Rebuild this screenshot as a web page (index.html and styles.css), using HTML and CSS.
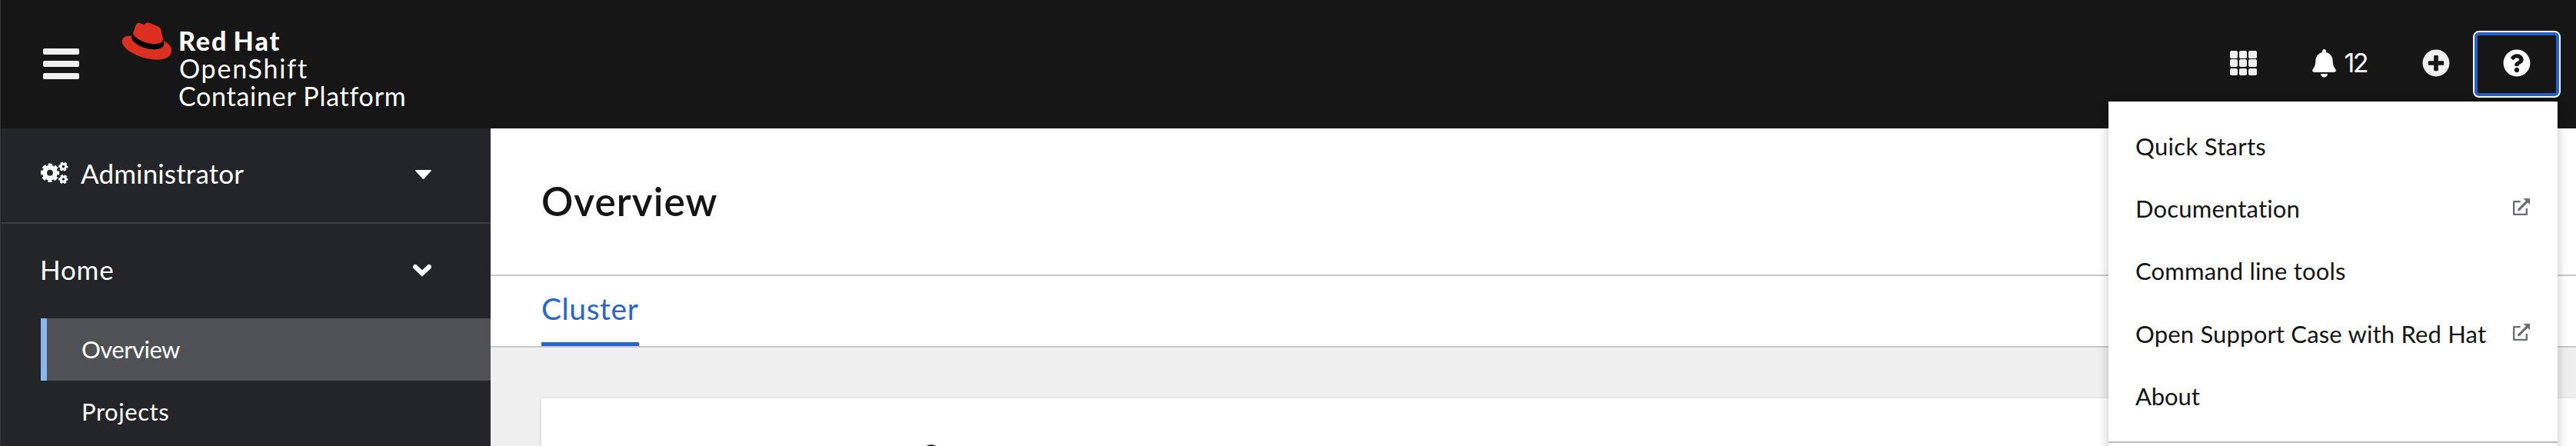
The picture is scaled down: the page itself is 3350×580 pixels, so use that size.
FILE: index.html
```html
<!DOCTYPE html>
<html lang="en">
<head>
<meta charset="utf-8">
<title>Overview · Cluster</title>
<link rel="stylesheet" href="styles.css">
</head>
<body>
<div class="page">
  <header class="masthead">
    <button class="nav-toggle" aria-label="Navigation"><span class="bar"></span><span class="bar"></span><span class="bar"></span></button>
    <div class="brand">
      <svg class="hat" viewBox="0 0 193 146" preserveAspectRatio="none">
        <path fill="#da2f21" d="M129,84c12.5,0,30.61-2.58,30.61-17.46a14,14,0,0,0-.31-3.42l-7.45-32.36c-1.72-7.12-3.23-10.35-15.73-16.6C126.39,9.19,105.26.5,99,.5,93.19.5,91.5,8,84.54,8c-6.68,0-11.64-5.6-17.89-5.6-6,0-9.91,4.09-12.93,12.5,0,0-8.41,23.72-9.49,27.16A6.43,6.43,0,0,0,44,44C44,53.21,80.37,84,129,84m32.53-11.37c1.73,8.19,1.73,9.05,1.73,10.13,0,14-15.74,21.77-36.43,21.77C80,104.47,39.08,76.92,39.08,58.76a18.45,18.45,0,0,1,1.51-7.33C23.77,52.27,2,55.27,2,74.47c0,31.48,74.59,70.28,133.65,70.28,45.28,0,56.7-20.48,56.7-36.65,0-12.72-11-27.16-30.83-35.78"/>
        <path fill="#000" d="M161.52,72.62c1.73,8.19,1.73,9.05,1.73,10.13,0,14-15.74,21.77-36.43,21.77C80,104.52,39.08,77,39.08,58.76a18.45,18.45,0,0,1,1.51-7.33l3.66-9.06A6.43,6.43,0,0,0,44,44C44,53.21,80.37,84,129,84c12.5,0,30.61-2.58,30.61-17.46a14,14,0,0,0-.31-3.42Z"/>
      </svg>
      <div class="brand-text">
        <div class="brand-name">Red Hat</div>
        <div class="brand-product">OpenShift</div>
        <div class="brand-sub">Container Platform</div>
      </div>
    </div>
    <div class="tools">
      <div class="apps"><i></i><i></i><i></i><i></i><i></i><i></i><i></i><i></i><i></i></div>
      <div class="alerts">
        <svg class="bell" viewBox="0 0 31 37"><path fill="#fff" d="M15.500 0C17 0 18 1.200 18 2.800V4C23 5.200 26.300 9.300 26.600 14.500C26.900 20 27.500 22.500 30 25.600C31.500 27.800 30.800 30 28.500 30H2.500C.2 30-.5 27.800 1 25.600C3.500 22.500 4.100 20 4.400 14.500C4.700 9.300 8 5.200 13 4V2.800C13 1.200 14 0 15.500 0ZM11 32H20C20 34.700 18 36.600 15.500 36.600C13 36.600 11 34.700 11 32Z"/></svg>
        <span class="count">12</span>
      </div>
      <svg class="round-icon add" viewBox="0 0 512 512"><path fill="#f0f0f0" d="M256 8C119 8 8 119 8 256s111 248 248 248 248-111 248-248S393 8 256 8zm144 276c0 6.600-5.400 12-12 12h-92v92c0 6.600-5.400 12-12 12h-56c-6.600 0-12-5.400-12-12v-92h-92c-6.600 0-12-5.400-12-12v-56c0-6.600 5.400-12 12-12h92v-92c0-6.600 5.400-12 12-12h56c6.600 0 12 5.400 12 12v92h92c6.600 0 12 5.400 12 12v56z"/></svg>
      <button class="help" aria-label="Help">
        <svg class="round-icon" viewBox="0 0 512 512"><path fill="#fff" d="M504 256c0 136.997-111.043 248-248 248S8 392.997 8 256C8 119.083 119.043 8 256 8s248 111.083 248 248zM262.655 90c-54.497 0-89.255 22.957-116.549 63.758-3.536 5.286-2.353 12.415 2.715 16.258l34.699 26.310c5.205 3.947 12.621 3.008 16.665-2.122 17.864-22.658 30.113-35.797 57.303-35.797 20.429 0 45.698 13.148 45.698 32.958 0 14.976-12.363 22.667-32.534 33.976C247.128 238.528 216 254.941 216 296v4c0 6.627 5.373 12 12 12h56c6.627 0 12-5.373 12-12v-1.333c0-28.462 83.186-29.647 83.186-106.667 0-58.002-60.165-102-116.531-102zM256 338c-25.365 0-46 20.635-46 46 0 25.364 20.635 46 46 46s46-20.636 46-46c0-25.365-20.635-46-46-46z"/></svg>
      </button>
    </div>
    <div class="menu">
      <div class="menu-item quick">Quick Starts</div>
      <div class="menu-item">Documentation
        <svg class="external" viewBox="39 24 66 66"><path fill="none" stroke="#6a6e73" stroke-width="7" stroke-linejoin="round" d="M68 36.500H42.500V86.500H92.500V63"/><path fill="none" stroke="#6a6e73" stroke-width="9.500" stroke-linecap="round" d="M62 68L95 35"/><path fill="#6a6e73" d="M80 24H105V49Z"/></svg>
      </div>
      <div class="menu-item">Command line tools</div>
      <div class="menu-item support">Open Support Case with Red Hat
        <svg class="external" viewBox="39 24 66 66"><path fill="none" stroke="#6a6e73" stroke-width="7" stroke-linejoin="round" d="M68 36.500H42.500V86.500H92.500V63"/><path fill="none" stroke="#6a6e73" stroke-width="9.500" stroke-linecap="round" d="M62 68L95 35"/><path fill="#6a6e73" d="M80 24H105V49Z"/></svg>
      </div>
      <div class="menu-item about">About</div>
      <div class="menu-divider"></div>
    </div>
  </header>
  <div class="body">
    <nav class="sidebar">
      <div class="perspective">
        <svg class="cogs" viewBox="0 0 36 30" fill="none" stroke="#fff">
          <circle cx="12" cy="14.700" r="6.900" stroke-width="6"/>
          <circle cx="12" cy="14.700" r="10.600" stroke-width="3.200" stroke-dasharray="5.200 3.125" stroke-dashoffset="2.600"/>
          <circle cx="29.300" cy="6.600" r="3.300" stroke-width="3"/>
          <circle cx="29.300" cy="6.600" r="5" stroke-width="2.200" stroke-dasharray="3.200 2.036" stroke-dashoffset="1.600"/>
          <circle cx="29.300" cy="23" r="3.300" stroke-width="3"/>
          <circle cx="29.300" cy="23" r="5" stroke-width="2.200" stroke-dasharray="3.200 2.036" stroke-dashoffset="1.600"/>
        </svg>
        <span class="perspective-label">Administrator</span>
        <svg class="caret" viewBox="0 0 21 12"><path fill="#fff" d="M1 0H20Q21.500 .3 20.500 1.600L11.600 11.300Q10.500 12.300 9.400 11.300L.5 1.600Q-.5 .3 1 0Z"/></svg>
      </div>
      <div class="section">
        <span class="section-label">Home</span>
        <svg class="chevron" viewBox="0 0 26 17"><path fill="none" stroke="#fff" stroke-width="6" stroke-linecap="round" d="M4 4L13 12.500L22 4"/></svg>
      </div>
      <div class="nav-item current"><span class="nav-overview">Overview</span></div>
      <div class="nav-item"><span class="nav-projects">Projects</span></div>
    </nav>
    <main class="main">
      <div class="title-row"><h1 class="title">Overview</h1></div>
      <div class="tabs"><div class="tab">Cluster</div></div>
      <div class="content">
        <div class="card"><svg class="card-icon" viewBox="0 0 26 26"><circle cx="13" cy="13" r="11" fill="none" stroke="#151515" stroke-width="3.500"/></svg></div>
      </div>
    </main>
  </div>
</div>
</body>
</html>
```
FILE: styles.css
```css
* { box-sizing: border-box; }
body {
  margin: 0;
  font-family: Lato, "Open Sans", sans-serif;
  color: #151515;
  background: #fff;
}
svg { display: block; flex: none; }
button { border: 0; padding: 0; background: none; font: inherit; }
.page {
  width: 3350px;
  height: 580px;
  overflow: hidden;
  display: flex;
  flex-direction: column;
  border-left: 1px solid #36373b;
}

/* Masthead */
.masthead {
  position: relative;
  z-index: 2;
  flex: none;
  display: flex;
  height: 167px;
  padding: 0 20px 0 55px;
  background: #161616;
  color: #fff;
}
.nav-toggle {
  display: flex;
  flex-direction: column;
  gap: 8px;
  width: 47px;
  padding-top: 63px;
}
.bar { height: 8px; border-radius: 2px; background: #f0f0f0; }
.brand { display: flex; gap: 9px; margin-left: 54.500px; }
.hat { width: 65.400px; height: 49.100px; margin-top: 28.800px; }
.brand-text { padding-top: 35px; font-size: 34px; line-height: 36.200px; white-space: nowrap; }
.brand-name { font-weight: 900; letter-spacing: 2px; word-spacing: -3px; }
.brand-product { letter-spacing: 1.790px; margin-left: 1px; }
.brand-sub { font-weight: 400; letter-spacing: 0.750px; }
.tools { display: flex; align-items: center; height: 164px; margin-left: auto; }
.apps {
  display: grid;
  grid-template-columns: repeat(3, 10.500px);
  grid-template-rows: repeat(3, 9.500px);
  gap: 1.750px;
  width: 35px;
}
.apps i { border-radius: 2px; background: #f0f0f0; }
.alerts { display: flex; align-items: center; gap: 11px; width: 143px; margin-left: 72px; }
.bell { width: 31px; height: 37px; }
.count { font: 34px/44px Inter, sans-serif; letter-spacing: -2.500px; }
.add { margin-bottom: 1px; }
.round-icon { width: 36px; height: 36px; }
.help {
  display: flex;
  justify-content: center;
  width: 114px;
  height: 87px;
  margin: 3px 0 0 30.500px;
  padding-top: 22px;
  border: 2px solid #fff;
  border-radius: 8px;
  box-shadow: inset 0 0 0 4px #2660c6;
}

/* Help menu */
.menu {
  position: absolute;
  top: 132px;
  right: 24px;
  width: 584px;
  height: 460px;
  padding-top: 17px;
  background: #fff;
  color: #151515;
  box-shadow: 0 8px 16px rgba(3, 3, 3, 0.12), 0 0 12px rgba(3, 3, 3, 0.12);
}
.menu-item {
  display: flex;
  align-items: center;
  justify-content: space-between;
  height: 81.400px;
  padding: 0 36px 0 35px;
  font-size: 31px;
  letter-spacing: 0.180px;
  white-space: nowrap;
}
.quick { letter-spacing: 0.320px; }
.support { letter-spacing: 0.180px; }
.about { letter-spacing: -0.100px; }
.external { width: 22px; height: 22px; margin-bottom: 4px; }
.menu-divider { height: 2px; margin-top: 18px; background: #b8b8bb; }

/* Sidebar */
.body { display: flex; flex: 1; }
.sidebar { flex: none; width: 637px; height: 413px; background: #242529; color: #fff; border-bottom: 1px solid #2b2229; }
.perspective {
  display: flex;
  align-items: center;
  height: 124px;
  padding: 0 77px 6px 52px;
  border-bottom: 2px solid #3c3d41;
  font-size: 35px;
}
.cogs { width: 36px; height: 30px; }
.perspective-label { margin-left: 16px; letter-spacing: 0.140px; }
.caret { width: 21px; height: 12px; margin-left: auto; margin-top: 3px; }
.section { display: flex; align-items: center; justify-content: space-between; height: 123px; padding: 0 76px 3px 51px; font-size: 35px; }
.section-label { letter-spacing: 0.800px; padding-bottom: 2px; }
.chevron { width: 26px; height: 17px; }
.nav-item { display: flex; align-items: center; height: 81px; margin-left: 52px; padding: 0 0 1px 53px; font-size: 31px; }
.current { padding-left: 45px; border-left: 8px solid #86b9f3; background: #505154; }
.nav-overview { letter-spacing: -0.500px; }
.nav-projects { letter-spacing: 0.570px; }

/* Main */
.main { flex: 1; display: flex; flex-direction: column; }
.title-row { flex: none; display: flex; align-items: center; height: 192px; padding: 0 0 2px 66px; border-bottom: 2px solid #c9c9c9; }
.title { margin: 0; font-size: 51.500px; line-height: 62px; font-weight: 600; letter-spacing: 1px; }
.tabs { flex: none; display: flex; height: 93px; padding-left: 66px; border-bottom: 2px solid #c9c9c9; }
.tab { width: 127px; line-height: 84px; font-size: 39px; letter-spacing: 0.550px; color: #2866c8; border-bottom: 5px solid #2866c8; }
.content { flex: 1; padding: 66px 0 0 66px; background: #efefef; }
.card { height: 80px; padding: 60px 0 0 494px; background: #fff; box-shadow: 0 1px 4px rgba(3, 3, 3, 0.16); }
.card-icon { width: 26px; height: 26px; }
```
